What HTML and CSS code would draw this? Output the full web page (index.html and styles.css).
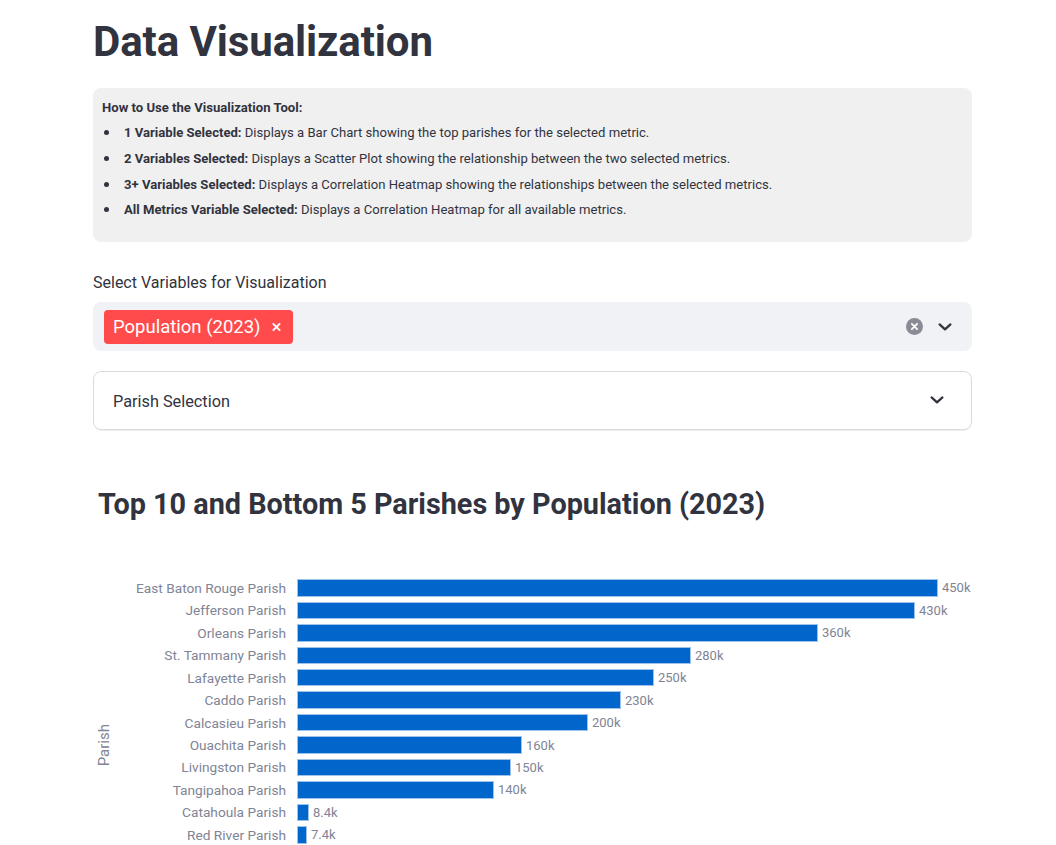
FILE: index.html
```html
<!DOCTYPE html>
<html lang="en">
<head>
<meta charset="utf-8">
<title>Data Visualization</title>
<link rel="stylesheet" href="styles.css">
</head>
<body>
<main class="main">
  <h1 class="page-title">Data Visualization</h1>

  <div class="info-box">
    <p class="info-head">How to Use the Visualization Tool:</p>
    <ul class="info-list">
      <li><strong>1 Variable Selected:</strong> Displays a Bar Chart showing the top parishes for the selected metric.</li>
      <li><strong>2 Variables Selected:</strong> Displays a Scatter Plot showing the relationship between the two selected metrics.</li>
      <li><strong>3+ Variables Selected:</strong> Displays a Correlation Heatmap showing the relationships between the selected metrics.</li>
      <li><strong>All Metrics Variable Selected:</strong> Displays a Correlation Heatmap for all available metrics.</li>
    </ul>
  </div>

  <label class="field-label">Select Variables for Visualization</label>
  <div class="multiselect">
    <div class="tags">
      <span class="tag">Population (2023)<span class="tag-x">×</span></span>
    </div>
    <div class="ms-icons">
      <svg class="clear-icon" width="17" height="17" viewBox="0 0 24 24"><circle cx="12" cy="12" r="12" fill="#8a8b94"/><path d="M8.3 8.3l7.4 7.4M15.7 8.3l-7.4 7.4" stroke="#fff" stroke-width="2.6" stroke-linecap="round"/></svg>
      <svg class="chev" width="14" height="8" viewBox="0 0 14 8"><path d="M1.6 1.4L7 6.4l5.4-5" fill="none" stroke="#31333f" stroke-width="2.2" stroke-linecap="round" stroke-linejoin="round"/></svg>
    </div>
  </div>

  <div class="expander">
    <span class="exp-title">Parish Selection</span>
    <svg class="chev" width="14" height="8" viewBox="0 0 14 8"><path d="M1.6 1.4L7 6.4l5.4-5" fill="none" stroke="#31333f" stroke-width="2.2" stroke-linecap="round" stroke-linejoin="round"/></svg>
  </div>

  <section class="chart">
    <h2 class="chart-title">Top 10 and Bottom 5 Parishes by Population (2023)</h2>
    <div class="plot">
      <div class="y-title"><span>Parish</span></div>
      <div class="rows">
        <div class="row"><span class="tick">East Baton Rouge Parish</span><div class="bar-cell"><div class="bar" style="width:641px"></div><span class="val">450k</span></div></div>
        <div class="row"><span class="tick">Jefferson Parish</span><div class="bar-cell"><div class="bar" style="width:618px"></div><span class="val">430k</span></div></div>
        <div class="row"><span class="tick">Orleans Parish</span><div class="bar-cell"><div class="bar" style="width:521px"></div><span class="val">360k</span></div></div>
        <div class="row"><span class="tick">St. Tammany Parish</span><div class="bar-cell"><div class="bar" style="width:394px"></div><span class="val">280k</span></div></div>
        <div class="row"><span class="tick">Lafayette Parish</span><div class="bar-cell"><div class="bar" style="width:357px"></div><span class="val">250k</span></div></div>
        <div class="row"><span class="tick">Caddo Parish</span><div class="bar-cell"><div class="bar" style="width:324px"></div><span class="val">230k</span></div></div>
        <div class="row"><span class="tick">Calcasieu Parish</span><div class="bar-cell"><div class="bar" style="width:291px"></div><span class="val">200k</span></div></div>
        <div class="row"><span class="tick">Ouachita Parish</span><div class="bar-cell"><div class="bar" style="width:225px"></div><span class="val">160k</span></div></div>
        <div class="row"><span class="tick">Livingston Parish</span><div class="bar-cell"><div class="bar" style="width:214px"></div><span class="val">150k</span></div></div>
        <div class="row"><span class="tick">Tangipahoa Parish</span><div class="bar-cell"><div class="bar" style="width:197px"></div><span class="val">140k</span></div></div>
        <div class="row"><span class="tick">Catahoula Parish</span><div class="bar-cell"><div class="bar" style="width:12px"></div><span class="val">8.4k</span></div></div>
        <div class="row"><span class="tick">Red River Parish</span><div class="bar-cell"><div class="bar" style="width:10px"></div><span class="val">7.4k</span></div></div>
      </div>
    </div>
  </section>
</main>
</body>
</html>
```
FILE: styles.css
```css
* { box-sizing: border-box; }
html, body { margin: 0; padding: 0; background: #ffffff; }
body {
  font-family: Roboto, "Liberation Sans", sans-serif;
  color: #31333f;
}
.main {
  width: 879px;
  margin-left: 93px;
  padding-top: 17px;
  padding-bottom: 40px;
}
.page-title {
  margin: 0 0 21px 0;
  font-size: 42px;
  line-height: 1.2;
  font-weight: 700;
  color: #31333f;
  letter-spacing: -0.1px;
}
.info-box {
  background: #f0f0f0;
  border-radius: 8px;
  padding: 10px 10px 22px 9px;
  font-size: 13.1px;
  line-height: 20px;
}
.info-head {
  margin: 0 0 5px 0;
  font-weight: 700;
}
.info-list {
  margin: 0;
  padding: 0;
  list-style: none;
}
.info-list li {
  margin-bottom: 5.6px;
  white-space: nowrap;
}
.info-list li:last-child { margin-bottom: 0; }
.info-list li::before {
  content: "";
  display: inline-block;
  width: 5px;
  height: 5px;
  border-radius: 50%;
  background: #31333f;
  margin: 0 15px 2px 2px;
  vertical-align: middle;
}
.info-list strong { font-weight: 700; }
.field-label {
  display: block;
  margin-top: 31px;
  font-size: 16px;
  line-height: 20px;
  margin-bottom: 9px;
}
.multiselect {
  height: 49px;
  background: #f0f2f6;
  border-radius: 8px;
  display: flex;
  align-items: center;
  justify-content: space-between;
  padding: 0 20px 0 11px;
}
.tag {
  display: inline-flex;
  align-items: center;
  height: 34px;
  background: #ff4b4b;
  color: #ffffff;
  border-radius: 4px;
  padding: 0 11px 0 9px;
  font-size: 18.5px;
}
.tag-x {
  margin-left: 11px;
  font-size: 19px;
  line-height: 1;
}
.ms-icons {
  display: flex;
  align-items: center;
  gap: 15px;
}
.chev { display: block; }
.expander {
  margin-top: 20px;
  height: 59px;
  border: 1px solid #dadbe0;
  border-radius: 8px;
  display: flex;
  align-items: center;
  justify-content: space-between;
  padding: 0 27px 0 19px;
  font-size: 16.3px;
  box-shadow: 0 2px 1px -1px rgba(0, 0, 0, 0.07);
}
.exp-title { position: relative; top: 1px; }
.expander .chev { position: relative; top: -1px; }
.chart {
  margin-top: 57px;
  padding-left: 5px;
}
.chart-title {
  margin: 0;
  font-size: 28.8px;
  line-height: 1.2;
  font-weight: 700;
  color: #31333f;
}
.plot {
  margin-top: 55px;
  margin-left: -5px;
  display: flex;
}
.y-title {
  width: 22px;
  display: flex;
  align-items: center;
  justify-content: center;
  color: #808495;
  font-size: 15px;
}
.y-title span {
  writing-mode: vertical-rl;
  transform: rotate(180deg);
}
.rows {
  flex: 1;
  padding-bottom: 67.35px;
}
.row {
  display: grid;
  grid-template-columns: 171px 1fr;
  column-gap: 11px;
  height: 22.45px;
  align-items: center;
}
.tick {
  text-align: right;
  font-size: 13.7px;
  color: #808495;
  white-space: nowrap;
}
.bar-cell {
  display: flex;
  align-items: center;
}
.bar {
  height: 17.5px;
  background: #0066cc;
  border: 1px solid #9ec3ea;
}
.val {
  margin-left: 4px;
  font-size: 13px;
  color: #808495;
}
```
